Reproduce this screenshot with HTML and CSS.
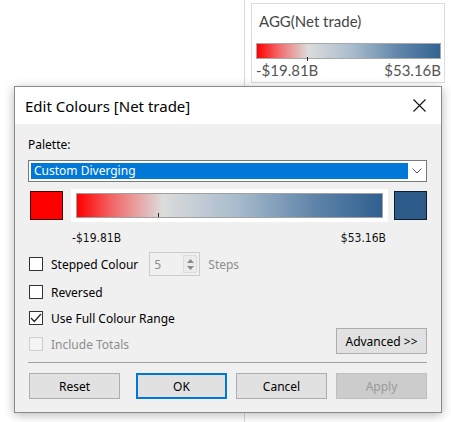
FILE: index.html
```html
<!DOCTYPE html>
<html>
<head>
<meta charset="utf-8">
<link rel="stylesheet" href="styles.css">
</head>
<body>
<div class="page">
  <div class="side">
    <div class="legend">
      <div class="legend-title">AGG(Net trade)</div>
      <div class="legend-bar"><span class="legend-tick"></span></div>
      <div class="legend-labels"><span>-$19.81B</span><span>$53.16B</span></div>
    </div>
  </div>

  <div class="dialog">
    <div class="titlebar">
      <span class="title">Edit Colours [Net trade]</span>
      <svg class="close" width="13" height="13" viewBox="0 0 13 13"><path d="M0.5 0.5 L12.5 12.5 M12.5 0.5 L0.5 12.5" stroke="#111" stroke-width="1.1" fill="none"/></svg>
    </div>
    <div class="body">
      <div class="label">Palette:</div>
      <div class="select">
        <div class="sel-value">Custom Diverging</div>
        <div class="sel-arrow"><svg width="10" height="6" viewBox="0 0 10 6"><path d="M0.5 0.5 L5 5 L9.5 0.5" stroke="#5a5a5a" stroke-width="1" fill="none"/></svg></div>
      </div>
      <div class="colours">
        <div class="swatch red"></div>
        <div class="ramp-frame"><div class="ramp"><span class="ramp-tick"></span></div></div>
        <div class="swatch blue"></div>
      </div>
      <div class="ramp-labels"><span>-$19.81B</span><span>$53.16B</span></div>

      <div class="row stepped">
        <div class="check"><span class="box"></span><span>Stepped Colour</span></div>
        <div class="spin">
          <span class="spin-val">5</span>
          <span class="spin-btns">
            <svg width="7" height="4" viewBox="0 0 7 4"><path d="M0 4 L3.5 0 L7 4 Z" fill="#8a8a8a"/></svg>
            <svg width="7" height="4" viewBox="0 0 7 4"><path d="M0 0 L3.5 4 L7 0 Z" fill="#8a8a8a"/></svg>
          </span>
        </div>
        <span class="muted">Steps</span>
      </div>
      <div class="row"><div class="check"><span class="box"></span><span>Reversed</span></div></div>
      <div class="row"><div class="check"><span class="box"><svg width="12" height="10" viewBox="0 0 12 10"><path d="M1 5 L4.3 8.5 L11 1" stroke="#222" stroke-width="1.2" fill="none"/></svg></span><span>Use Full Colour Range</span></div></div>
      <div class="row last">
        <div class="check disabled"><span class="box"></span><span>Include Totals</span></div>
        <button class="btn adv">Advanced &gt;&gt;</button>
      </div>
      <div class="sep"></div>
      <div class="buttons">
        <button class="btn">Reset</button>
        <button class="btn ok">OK</button>
        <button class="btn">Cancel</button>
        <button class="btn off">Apply</button>
      </div>
    </div>
  </div>
</div>
</body>
</html>
```

FILE: styles.css
```css
* { box-sizing: border-box; }
html, body { margin: 0; padding: 0; background: #fff; }
body { font-family: "Noto Sans", "Open Sans", sans-serif; }

.page { position: relative; width: 451px; height: 422px; overflow: hidden; }

.side {
  margin-left: 244px;
  height: 422px;
  border-left: 1px solid #dadada;
  padding: 3px 6px 0 6px;
}
.legend {
  width: 194px;
  height: 80px;
  border: 1px solid #dcdcdc;
  padding: 0 3px 0 4px;
  font-family: Lato, "Open Sans", sans-serif;
  color: #555;
}
.legend-title { font-size: 15px; line-height: 20px; margin-top: 7px; padding-left: 3px; color: #444; }
.legend-bar {
  position: relative;
  height: 16px;
  margin-top: 12px;
  border: 1px solid #a8a8a8;
  background: linear-gradient(to right, #ff0000 0%, #f26a6a 12%, #dcdcdc 28%, #a9bccd 52%, #5f84a9 78%, #336493 100%);
}
.legend-tick { position: absolute; left: 50px; bottom: -3px; width: 1px; height: 4px; background: #222; }
.legend-labels { display: flex; justify-content: space-between; font-size: 15px; line-height: 16px; margin-top: 3px; color: #555; }

.dialog {
  position: absolute;
  left: 14px; top: 86px;
  width: 428px; height: 327px;
  border: 1px solid #8a8a8a;
  background: #f0f0f0;
  box-shadow: 0 2px 10px rgba(0,0,0,0.28);
  font-size: 12px;
  color: #000;
}
.titlebar {
  height: 37px;
  background: #fff;
  display: flex; align-items: center; justify-content: space-between;
  padding: 0 15px 0 10px;
}
.title { font-size: 15px; color: #000; }
.close { display: block; }

.body { padding: 13px 14px 0 13px; }
.label { line-height: 16px; }
.select {
  margin-top: 7px;
  height: 22px;
  border: 1px solid #7a7a7a;
  background: #fff;
  display: flex;
  padding: 2px 0 2px 2px;
}
.sel-value {
  flex: 1;
  background: #0078d7;
  color: #fff;
  line-height: 16px;
  padding-left: 3px;
}
.sel-arrow { width: 18px; display: flex; align-items: center; justify-content: center; }
.sel-arrow svg { display: block; }

.colours { margin-top: 7px; height: 33px; display: flex; align-items: center; }
.swatch { width: 33px; height: 29px; border: 1px solid #222; }
.swatch.red { background: #ff0000; margin-left: 2px; border-color: #3a0a0a; }
.swatch.blue { background: #2c5b8a; margin-left: 6px; border-color: #101c2a; }
.ramp-frame { width: 317px; height: 33px; margin-left: 8px; background: #fff; padding: 4px 5px 4px 5px; }
.ramp {
  position: relative;
  height: 25px;
  border: 1px solid #a0a0a0;
  background: linear-gradient(to right, #ff0000 0%, #f26a6a 12%, #dcdcdc 28%, #a9bccd 52%, #5f84a9 78%, #2f6090 100%);
}
.ramp-tick { position: absolute; left: 81px; bottom: 0; width: 1px; height: 4px; background: #222; }

.ramp-labels {
  margin-top: 8px;
  margin-left: 44px;
  width: 314px;
  display: flex; justify-content: space-between;
  font-family: "DejaVu Sans Condensed", "DejaVu Sans", sans-serif;
  font-size: 12px;
  line-height: 16px;
  color: #111;
}

.row { display: flex; align-items: center; height: 20px; margin-top: 6px; }
.row.stepped { height: 24px; margin-top: 6px; }
.row.last { height: 26px; margin-top: 0; align-items: flex-end; justify-content: space-between; }
.check { display: flex; align-items: center; height: 20px; }
.box {
  width: 14px; height: 14px;
  border: 1px solid #333;
  background: #fff;
  margin-left: 1px; margin-right: 8px;
  display: flex; align-items: center; justify-content: center;
}
.box svg { display: block; }
.check.disabled { color: #8d8d8d; }
.check.disabled .box { border-color: #cfcfcf; background: #f4f4f4; }

.spin {
  margin-left: 11px;
  width: 51px; height: 24px;
  border: 1px solid #cccccc;
  display: flex; align-items: center;
  padding: 0 2px 0 4px;
  color: #8d8d8d;
}
.spin-val { flex: 1; }
.spin-btns {
  width: 14px; height: 18px;
  border: 1px solid #dcdcdc;
  background: #ececec;
  display: flex; flex-direction: column; align-items: center; justify-content: center; gap: 3px;
}
.spin-btns svg { display: block; }
.muted { color: #8d8d8d; margin-left: 8px; }

.btn {
  font-family: "Noto Sans", "Open Sans", sans-serif;
  font-size: 12px;
  width: 91px; height: 26px;
  border: 1px solid #adadad;
  background: #e1e1e1;
  color: #000;
  padding: 0;
  margin: 0;
}
.btn.ok { border: 2px solid #0078d7; }
.btn.off { background: #cccccc; border-color: #bfbfbf; color: #9a9a9a; }
.sep { margin-top: 8px; height: 1px; background: #a0a0a0; }
.buttons { display: flex; margin-top: 10px; }
.buttons .btn { margin-left: 9px; }
.buttons .btn:first-child { margin-left: 1px; }
.buttons .btn.ok { margin-left: 16px; }
```
